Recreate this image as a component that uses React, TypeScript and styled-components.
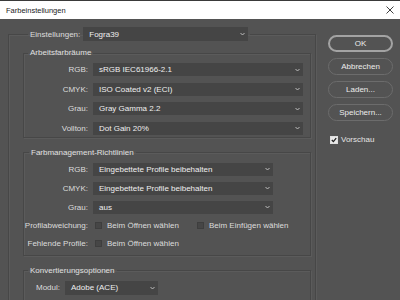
import React from "react";
import styled, { createGlobalStyle } from "styled-components";

const Global = createGlobalStyle`
  html, body { margin: 0; padding: 0; background: #535353; }
  body { font-family: "Liberation Sans", Arial, sans-serif; }
  * { box-sizing: border-box; }
`;

const Window = styled.div`
  width: 400px;
  height: 300px;
  overflow: hidden;
  display: flex;
  flex-direction: column;
  background: #535353;
  color: #dedede;
  font-size: 8px;
`;

const TitleBar = styled.div`
  height: 19px;
  flex: none;
  background: #ffffff;
  border-top: 1px solid #3a3a3a;
  display: flex;
  align-items: center;
  justify-content: space-between;
  padding: 0 6px;
  color: #1b1b1b;
  font-size: 7.5px;
`;

const Body = styled.div`
  flex: 1;
  min-height: 0;
  display: flex;
`;

const Main = styled.div`
  flex: 0 0 316px;
  padding: 8px 0 0 8px;
`;

const Side = styled.div`
  flex: 1;
  padding: 16px 7px 0 12px;
  display: flex;
  flex-direction: column;
  gap: 6px;
`;

const Group = styled.fieldset<{ $outer?: boolean; $mt?: number; $pb?: number }>`
  margin: ${(p) => (p.$outer ? "0" : `${p.$mt ?? 0}px 4px 0 14px`)};
  padding: ${(p) => (p.$outer ? "0 0 0 0" : `0 7px ${p.$pb ?? 0}px 0`)};
  border: 1px solid #474747;
  ${(p) => (p.$outer ? "border-bottom: none; min-height: 320px;" : "")}
  box-shadow: inset 1px 1px 0 #5b5b5b, 1px 1px 0 #5b5b5b;
  min-width: 0;
`;

const Legend = styled.legend<{ $ml: number }>`
  margin-left: ${(p) => p.$ml}px;
  padding: 0 2px;
  color: #e0e0e0;
  line-height: 10px;
  font-size: 8px;
`;

const LegendRow = styled.legend`
  margin-left: 19px;
  padding: 0 2px;
  display: flex;
  align-items: center;
  gap: 3px;
`;

const Rows = styled.div<{ $gap: number; $pt?: number }>`
  display: flex;
  flex-direction: column;
  gap: ${(p) => p.$gap}px;
  padding-top: ${(p) => p.$pt ?? 5}px;
`;

const Row = styled.div<{ $h?: number }>`
  display: flex;
  align-items: center;
  height: ${(p) => p.$h ?? 13}px;
  gap: 5px;
`;

const Label = styled.div<{ $w: number; $ml?: number }>`
  flex: none;
  width: ${(p) => p.$w}px;
  margin-left: ${(p) => p.$ml ?? 0}px;
  text-align: right;
  white-space: nowrap;
  color: #dcdcdc;
`;

const PlainLabel = styled.span`
  color: #dcdcdc;
  white-space: nowrap;
`;

const Select = styled.div<{ $w: number; $h?: number }>`
  flex: none;
  width: ${(p) => p.$w}px;
  height: ${(p) => p.$h ?? 13}px;
  background: #454545;
  color: #efefef;
  display: flex;
  align-items: center;
  justify-content: space-between;
  padding: 0 3px 0 6px;
  white-space: nowrap;
  font-size: 8px;
`;

const Chevron = () => (
  <svg width="5" height="4" viewBox="0 0 5 4">
    <path d="M0.5 1 L2.5 3 L4.5 1" fill="none" stroke="#bdbdbd" strokeWidth="1" />
  </svg>
);

const Box = styled.span<{ $checked?: boolean; $size?: number }>`
  flex: none;
  width: ${(p) => p.$size ?? 7}px;
  height: ${(p) => p.$size ?? 7}px;
  background: ${(p) => (p.$checked ? "#e8e8e8" : "#464646")};
  border: 1px solid ${(p) => (p.$checked ? "#dedede" : "#3e3e3e")};
  display: inline-flex;
  align-items: center;
  justify-content: center;
`;

const CheckOpt = styled.label<{ $ml?: number }>`
  display: inline-flex;
  align-items: center;
  gap: 5px;
  margin-left: ${(p) => p.$ml ?? 0}px;
  color: #dcdcdc;
  white-space: nowrap;
`;

const Button = styled.button<{ $primary?: boolean }>`
  width: 65px;
  height: 17px;
  border-radius: 9px;
  border: ${(p) => (p.$primary ? "2px solid #a3a3a3" : "1px solid #6c6c6c")};
  background: #535353;
  color: #ececec;
  font-family: "Liberation Sans", Arial, sans-serif;
  font-size: 8px;
  padding: 0;
  display: flex;
  align-items: center;
  justify-content: center;
`;

const Preview = styled.label`
  display: flex;
  align-items: center;
  gap: 3px;
  margin: 8px 0 0 2px;
  color: #e4e4e4;
`;

const Close = () => (
  <svg width="8" height="8" viewBox="0 0 8 8">
    <path d="M0.5 0.5 L7.5 7.5 M7.5 0.5 L0.5 7.5" stroke="#2a2a2a" strokeWidth="0.9" />
  </svg>
);

const Tick = () => (
  <svg width="6" height="6" viewBox="0 0 6 6">
    <path d="M0.8 3 L2.4 4.6 L5.2 1.2" fill="none" stroke="#1e1e1e" strokeWidth="1.3" />
  </svg>
);

export default function App() {
  return (
    <>
      <Global />
      <Window>
        <TitleBar>
          <span>Farbeinstellungen</span>
          <Close />
        </TitleBar>
        <Body>
          <Main>
            <Group $outer>
              <LegendRow>
                <PlainLabel>Einstellungen:</PlainLabel>
                <Select $w={165} $h={14}>
                  <span>Fogra39</span>
                  <Chevron />
                </Select>
              </LegendRow>

              <Group $mt={7} $pb={2}>
                <Legend $ml={4}>Arbeitsfarbräume</Legend>
                <Rows $gap={6.5}>
                  <Row>
                    <Label $w={64}>RGB:</Label>
                    <Select $w={210}>
                      <span>sRGB IEC61966-2.1</span>
                      <Chevron />
                    </Select>
                  </Row>
                  <Row>
                    <Label $w={64}>CMYK:</Label>
                    <Select $w={210}>
                      <span>ISO Coated v2 (ECI)</span>
                      <Chevron />
                    </Select>
                  </Row>
                  <Row>
                    <Label $w={64}>Grau:</Label>
                    <Select $w={210}>
                      <span>Gray Gamma 2.2</span>
                      <Chevron />
                    </Select>
                  </Row>
                  <Row>
                    <Label $w={64}>Vollton:</Label>
                    <Select $w={210}>
                      <span>Dot Gain 20%</span>
                      <Chevron />
                    </Select>
                  </Row>
                </Rows>
              </Group>

              <Group $mt={10} $pb={5}>
                <Legend $ml={5}>Farbmanagement-Richtlinien</Legend>
                <Rows $gap={6}>
                  <Row>
                    <Label $w={64}>RGB:</Label>
                    <Select $w={180}>
                      <span>Eingebettete Profile beibehalten</span>
                      <Chevron />
                    </Select>
                  </Row>
                  <Row>
                    <Label $w={64}>CMYK:</Label>
                    <Select $w={180}>
                      <span>Eingebettete Profile beibehalten</span>
                      <Chevron />
                    </Select>
                  </Row>
                  <Row>
                    <Label $w={64}>Grau:</Label>
                    <Select $w={180}>
                      <span>aus</span>
                      <Chevron />
                    </Select>
                  </Row>
                  <Row $h={12}>
                    <Label $w={64}>Profilabweichung:</Label>
                    <CheckOpt $ml={2}>
                      <Box />
                      Beim Öffnen wählen
                    </CheckOpt>
                    <CheckOpt $ml={13}>
                      <Box />
                      Beim Einfügen wählen
                    </CheckOpt>
                  </Row>
                  <Row $h={12}>
                    <Label $w={64}>Fehlende Profile:</Label>
                    <CheckOpt $ml={2}>
                      <Box />
                      Beim Öffnen wählen
                    </CheckOpt>
                  </Row>
                </Rows>
              </Group>

              <Group $mt={10} $pb={8}>
                <Legend $ml={4}>Konvertierungsoptionen</Legend>
                <Rows $gap={6}>
                  <Row $h={14}>
                    <Label $w={25} $ml={11}>Modul:</Label>
                    <Select $w={93} $h={14}>
                      <span>Adobe (ACE)</span>
                      <Chevron />
                    </Select>
                  </Row>
                </Rows>
              </Group>
            </Group>
          </Main>
          <Side>
            <Button $primary>OK</Button>
            <Button>Abbrechen</Button>
            <Button>Laden...</Button>
            <Button>Speichern...</Button>
            <Preview>
              <Box $checked $size={8}>
                <Tick />
              </Box>
              Vorschau
            </Preview>
          </Side>
        </Body>
      </Window>
    </>
  );
}
